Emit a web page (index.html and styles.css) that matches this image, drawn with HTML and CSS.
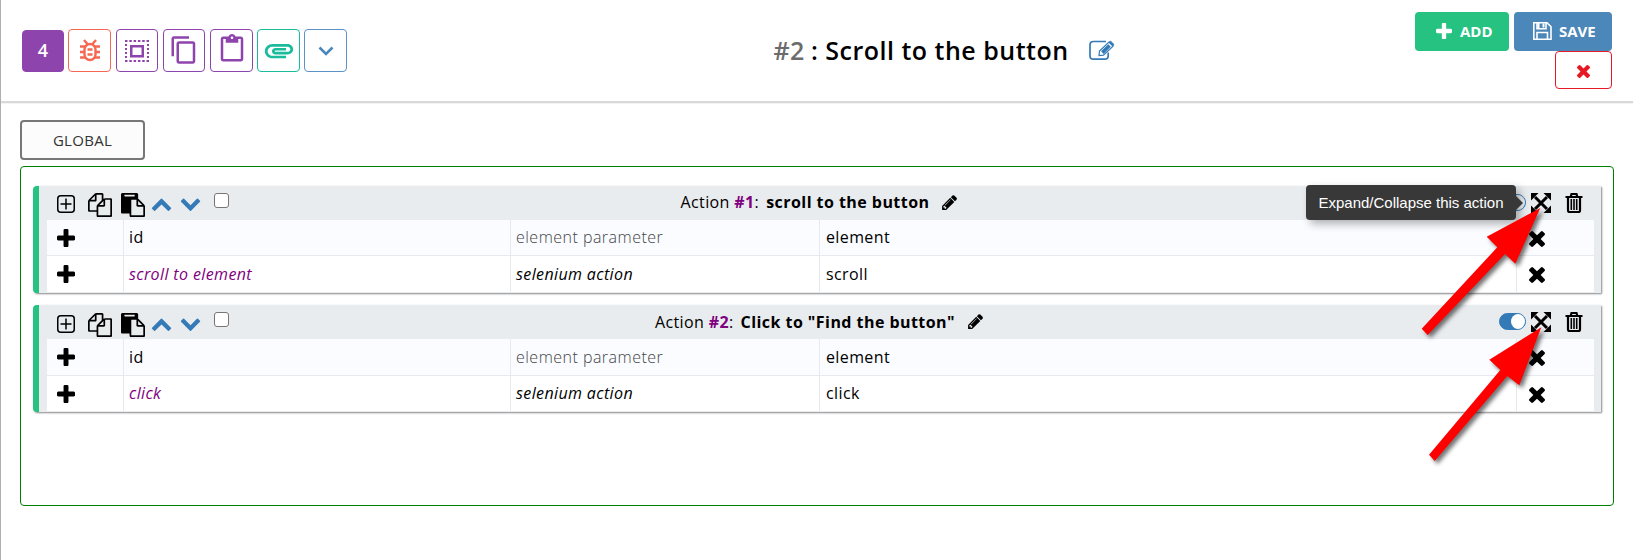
FILE: index.html
```html
<!DOCTYPE html>
<html lang="en">
<head>
<meta charset="utf-8">
<title>Scroll to the button</title>
<link rel="stylesheet" href="styles.css">
</head>
<body>
<svg class="defs" width="0" height="0">
  <symbol id="plus" viewBox="192 128 1408 1408"><path d="M1600 736v192q0 40-28 68t-68 28h-416v416q0 40-28 68t-68 28h-192q-40 0-68-28t-28-68v-416h-416q-40 0-68-28t-28-68v-192q0-40 28-68t68-28h416v-416q0-40 28-68t68-28h192q40 0 68 28t28 68v416h416q40 0 68 28t28 68z"/></symbol>
  <symbol id="times" viewBox="302 366 1188 1188"><path d="M1490 1322q0 40-28 68l-136 136q-28 28-68 28t-68-28l-294-294-294 294q-28 28-68 28t-68-28l-136-136q-28-28-28-68t28-68l294-294-294-294q-28-28-28-68t28-68l136-136q28-28 68-28t68 28l294 294 294-294q28-28 68-28t68 28l136 136q28 28 28 68t-28 68l-294 294 294 294q28 28 28 68z"/></symbol>
  <symbol id="up" viewBox="90 435 1612 1080"><path d="M1683 1331l-166 165q-19 19-45 19t-45-19l-531-531-531 531q-19 19-45 19t-45-19l-166-165q-19-19-19-45.500t19-45.500l742-741q19-19 45-19t45 19l742 741q19 19 19 45.500t-19 45.500z"/></symbol>
  <symbol id="down" viewBox="90 488 1612 1080"><path d="M1683 808l-742 741q-19 19-45 19t-45-19l-742-741q-19-19-19-45.500t19-45.500l166-165q19-19 45-19t45 19l531 531 531-531q19-19 45-19t45 19l166 165q19 19 19 45.500t-19 45.500z"/></symbol>
  <symbol id="pencil" viewBox="128 128 1515 1536"><path d="M491 1536l91-91-235-235-91 91v107h128v128h107zm523-928q0-22-22-22-10 0-17 7l-542 542q-7 7-7 17 0 22 22 22 10 0 17-7l542-542q7-7 7-17zm-54-192l416 416-832 832h-416v-416zm683 96q0 53-37 90l-166 166-416-416 166-165q36-38 90-38 53 0 91 38l235 234q37 39 37 91z"/></symbol>
  <symbol id="files" viewBox="0 0 1792 1792"><path d="M1696 384q40 0 68 28t28 68v1216q0 40-28 68t-68 28h-960q-40 0-68-28t-28-68v-288h-544q-40 0-68-28t-28-68v-672q0-40 20-88t48-76l408-408q28-28 76-48t88-20h416q40 0 68 28t28 68v328q68-40 128-40h416zm-544 213l-299 299h299v-299zm-640-384l-299 299h299v-299zm196 647l316-316v-416h-384v416q0 40-28 68t-68 28h-416v640h512v-256q0-40 20-88t48-76zm956 804v-1152h-384v416q0 40-28 68t-68 28h-416v640h896z"/></symbol>
  <symbol id="paste" viewBox="0 0 1792 1792"><path d="M768 1664h896v-640h-416q-40 0-68-28t-28-68v-416h-384v1152zm256-1440v-64q0-13-9.500-22.500t-22.500-9.500h-704q-13 0-22.500 9.500t-9.500 22.500v64q0 13 9.500 22.500t22.500 9.500h704q13 0 22.500-9.500t9.500-22.500zm256 672h299l-299-299v299zm512 128v672q0 40-28 68t-68 28h-960q-40 0-68-28t-28-68v-160h-544q-40 0-68-28t-28-68v-1344q0-40 28-68t68-28h1088q40 0 68 28t28 68v328q21 13 36 28l408 408q28 28 48 76t20 88z"/></symbol>
  <symbol id="add-box" viewBox="0 0 18 18"><rect x=".75" y=".75" width="16.500" height="16.500" rx="3" fill="none" stroke="#000" stroke-width="1.500"/><path d="M9 3.500v11M3.500 9h11" stroke="#000" stroke-width="1.500"/></symbol>
  <symbol id="expand" viewBox="0 0 20 20"><path d="M4 4l12 12M16 4L4 16" stroke="#000" stroke-width="3"/><path d="M0 0h7.500L0 7.500zM20 0v7.500L12.500 0zM0 20v-7.500L7.500 20zM20 20h-7.500l7.500-7.500z"/></symbol>
  <symbol id="trash" viewBox="0 0 18 20"><path d="M.5 4h17M5.800 3.500L6.500 1h5l.7 2.500" fill="none" stroke="#000" stroke-width="2.200"/><path d="M3 4v13.500q0 1.500 1.500 1.500h9q1.500 0 1.500-1.500V4" fill="none" stroke="#000" stroke-width="2.200"/><path d="M6.300 6v11M9 6v11M11.700 6v11" stroke="#000" stroke-width="1.600"/></symbol>
</svg>

<header class="topbar">
  <div class="tools">
    <span class="tool count">4</span>
    <span class="tool bug"><svg class="line" width="22" height="23" viewBox="0 0 22 23"><rect x="5.500" y="5" width="11" height="16" rx="5.500"/><path d="M5 1l3.500 4M17 1l-3.500 4M1 7.500h5M1 13h4.500M1 18.500h5M16 7.500h5M16.500 13H21M16 18.500h5M8.500 10.500h5M8.500 15.500h5"/></svg></span>
    <span class="tool select"><svg class="line" width="24" height="22" viewBox="0 0 24 22"><path stroke-dasharray="2.500 1.800" d="M0 1h24M0 21h24"/><path stroke-dasharray="2 2" d="M1 4v15M23 4v15"/><rect x="6.250" y="6.250" width="11.500" height="10" stroke-width="2.500"/></svg></span>
    <span class="tool copy"><svg width="30" height="30" viewBox="0 0 24 24"><path d="M16 1H4c-1.100 0-2 .9-2 2v14h2V3h12V1zm3 4H8c-1.100 0-2 .9-2 2v14c0 1.100.9 2 2 2h11c1.100 0 2-.9 2-2V7c0-1.100-.9-2-2-2zm0 16H8V7h11v14z"/></svg></span>
    <span class="tool paste"><svg width="30" height="30" viewBox="0 0 24 24"><path d="M19 2h-4.180C14.400.84 13.300 0 12 0c-1.300 0-2.400.84-2.820 2H5c-1.100 0-2 .9-2 2v16c0 1.100.9 2 2 2h14c1.100 0 2-.9 2-2V4c0-1.100-.9-2-2-2zm-7 0c.55 0 1 .45 1 1s-.45 1-1 1-1-.45-1-1 .45-1 1-1zm7 18H5V4h2v3h10V4h2v16z"/></svg></span>
    <span class="tool clip"><svg width="34" height="31" viewBox="0 0 24 24" preserveAspectRatio="none"><path d="M2 12.500C2 9.460 4.460 7 7.500 7H18c2.210 0 4 1.790 4 4s-1.790 4-4 4H9.500C8.120 15 7 13.880 7 12.500S8.120 10 9.500 10H17v2H9.410c-.55 0-.55 1 0 1H18c1.100 0 2-.9 2-2s-.9-2-2-2H7.500C5.570 9 4 10.570 4 12.500S5.570 16 7.500 16H17v2H7.500C4.460 18 2 15.540 2 12.500z"/></svg></span>
    <span class="tool more"><svg width="16" height="10" viewBox="0 0 16 10"><path d="M1.500 1.500L8 8l6.500-6.500" fill="none" stroke="currentColor" stroke-width="2.600"/></svg></span>
  </div>
  <h1 class="title"><span class="num">#2</span><span class="name">: Scroll to the button</span>
    <svg class="line edit" width="26" height="21" viewBox="0 0 26 21"><path d="M17 1.500H4.500Q1 1.500 1 5v10.700Q1 19.200 4.500 19.200h11.200q3.500 0 3.500-3.500V12.500" stroke-width="1.700"/><path d="M10 15.500l.5-4.500L20 2l4.200 4L14.500 15.200z" stroke-width="1.200"/><path d="M13.300 12.600L20.500 5.500" stroke-width="3.600"/><path d="M20 2.300l1.500-1.300 3.500 3.500-1.500 1.300z" fill="currentColor" stroke-width=".8"/></svg>
  </h1>
  <div class="actions">
    <div class="row"><span class="btn add"><svg width="16" height="16"><use href="#plus"/></svg>ADD</span><span class="btn save"><svg class="line" width="19" height="18" viewBox="0 0 19 18"><path stroke-width="1.600" d="M.8.8h13.200l4 4v12.400H.8zM4 .8v5.900h9V.8M4 17v-6.500h10.500V17"/><path d="M10.500 1.500v4M5.500 1v5" stroke-width="2"/></svg>SAVE</span></div>
    <span class="btn close"><svg width="13" height="13"><use href="#times"/></svg></span>
  </div>
</header>

<main class="page">
  <div class="tab">GLOBAL</div>
  <section class="board">
    <article class="card first">
      <div class="head">
        <div class="left"><svg class="i-add"><use href="#add-box"/></svg><svg class="i-doc"><use href="#files"/></svg><svg class="i-doc i-paste"><use href="#paste"/></svg><svg class="i-chev"><use href="#up"/></svg><svg class="i-chev"><use href="#down"/></svg><span class="check"></span></div>
        <div class="caption">Action <b class="idx">#1</b>:<b class="name">scroll to the button</b><svg class="i-pencil"><use href="#pencil"/></svg></div>
        <div class="right"><span class="toggle"></span><svg class="i-exp"><use href="#expand"/></svg><svg class="i-trash"><use href="#trash"/></svg>
          <div class="tip">Expand/Collapse this action</div></div>
      </div>
      <div class="grid">
        <div class="c"><svg class="i-plus"><use href="#plus"/></svg></div><div class="c">id</div><div class="c muted">element parameter</div><div class="c val">element</div><div class="c x"><svg class="i-x"><use href="#times"/></svg></div>
        <div class="c w"><svg class="i-plus"><use href="#plus"/></svg></div><div class="c w act">scroll to element</div><div class="c w it">selenium action</div><div class="c w val">scroll</div><div class="c w x"><svg class="i-x"><use href="#times"/></svg></div>
      </div>
    </article>
    <article class="card second">
      <div class="head">
        <div class="left"><svg class="i-add"><use href="#add-box"/></svg><svg class="i-doc"><use href="#files"/></svg><svg class="i-doc i-paste"><use href="#paste"/></svg><svg class="i-chev"><use href="#up"/></svg><svg class="i-chev"><use href="#down"/></svg><span class="check"></span></div>
        <div class="caption">Action <b class="idx">#2</b>:<b class="name">Click to "Find the button"</b><svg class="i-pencil"><use href="#pencil"/></svg></div>
        <div class="right"><span class="toggle"></span><svg class="i-exp"><use href="#expand"/></svg><svg class="i-trash"><use href="#trash"/></svg></div>
      </div>
      <div class="grid">
        <div class="c"><svg class="i-plus"><use href="#plus"/></svg></div><div class="c">id</div><div class="c muted">element parameter</div><div class="c val">element</div><div class="c x"><svg class="i-x"><use href="#times"/></svg></div>
        <div class="c w"><svg class="i-plus"><use href="#plus"/></svg></div><div class="c w act">click</div><div class="c w it">selenium action</div><div class="c w val">click</div><div class="c w x"><svg class="i-x"><use href="#times"/></svg></div>
      </div>
    </article>
  </section>
</main>
<svg class="arrows" width="1633" height="560" viewBox="0 0 1633 560">
  <path d="M1421.700 328.700L1497.300 247.300L1486.700 236.700L1540.300 208L1515.300 263.700L1505 254L1427.700 335z"/>
  <path d="M1429 454.700L1500.300 370L1489.300 359.700L1541.300 327.300L1519.300 385.300L1507.300 376L1434.700 461z"/>
</svg>
</body>
</html>
```
FILE: styles.css
```css
* { box-sizing: border-box; }
body {
  margin: 0;
  height: 560px;
  overflow: hidden;
  background: #fff;
  border-left: 1px solid #b0b0b0;
  font: 16px/22px "Open Sans", "Noto Sans", sans-serif;
  color: #000;
}
svg { display: block; flex: none; fill: currentColor; }
.line { fill: none; stroke: currentColor; stroke-width: 2; }
.bug .line { stroke-width: 2.400; }
.defs { position: absolute; }

.topbar {
  display: grid;
  grid-template-columns: 500px 1fr 500px;
  height: 103px;
  border-bottom: 2px solid #d9d9d9;
  box-shadow: 0 1px 0 #f3f3f3;
}
.tools { display: flex; gap: 4px; padding: 29px 0 0 20px; }
.tool {
  width: 43px;
  height: 43px;
  display: flex;
  align-items: center;
  justify-content: center;
  border: 1px solid #8e44ad;
  border-radius: 4px;
  color: #8e44ad;
}
.count { width: 42px; height: 42px; margin: 1px 0 0 1px; padding-bottom: 2px; background: #8e44ad; color: #fff; font-weight: 600; font-size: 18px; }
.bug { color: #f56954; border-color: #f56954; }
.select { width: 42px; margin-left: 1px; }
.copy { width: 42px; margin-left: 1px; }
.copy svg { margin-bottom: 1px; }
.paste { margin-left: 1px; }
.paste svg { margin-bottom: 3px; }
.clip { color: #1abc9c; border-color: #1abc9c; }
.more { color: #4c87b9; border-color: #5b93c8; }

.title {
  display: flex;
  justify-content: center;
  margin: 0;
  padding: 33px 0 0 254px;
  font-size: 25px;
  line-height: 34px;
  font-weight: 600;
  letter-spacing: .5px;
  white-space: nowrap;
}
.num { color: #6c6c6c; margin-right: 6px; }
.edit { margin: 7px 0 0 20px; color: #337ab7; }

.actions { display: flex; flex-direction: column; align-items: flex-end; padding: 12px 21px 0 0; }
.row { display: flex; gap: 5px; }
.btn {
  display: flex;
  align-items: center;
  height: 39px;
  padding-bottom: 1px;
  border-radius: 4px;
  color: #fff;
  font-weight: 700;
  font-size: 15px;
}
.add { width: 94px; padding-left: 21px; gap: 8px; background: #26c281; }
.save { width: 98px; padding-left: 19px; gap: 7px; background: #4c87b9; }
.close { width: 57px; height: 38px; padding: 2px 0 0; justify-content: center; border: 1px solid #e51a24; color: #e51a24; }

.page { padding: 17px 19px 0; }
.tab {
  width: 125px;
  height: 40px;
  border: 2px solid #777;
  border-radius: 4px;
  background: #fcfcfc;
  color: #333;
  font-size: 15px;
  line-height: 37px;
  letter-spacing: .3px;
  text-align: center;
}
.board { height: 340px; margin-top: 6px; padding: 19px 12px; border: 1px solid #008000; border-radius: 4px; }
.card {
  height: 107px;
  padding: 0 7px 0 8px;
  border-left: 6px solid #26c281;
  border-radius: 4px 0 0 4px;
  background: #e9ecef;
  box-shadow: 1px 1px 2px #888;
  letter-spacing: .38px;
}
.card + .card { margin-top: 12px; }
.head { position: relative; display: flex; justify-content: center; height: 34px; }
.left { position: absolute; left: 10px; top: 7px; display: flex; }
.i-add { width: 18px; height: 18px; margin-top: 2px; }
.i-doc { width: 24px; height: 24px; margin-left: 13px; }
.i-paste { margin-left: 9px; }
.i-chev { width: 21px; height: 13px; margin: 5px 0 0 8px; color: #337ab7; }
.i-paste + .i-chev { margin-left: 6px; }
.check { width: 15px; height: 15px; margin-left: 13px; border: 1px solid #767676; border-radius: 3px; background: #fff; }
.second .left { top: 8px; }
.second .check { margin-top: -1px; }
.caption { display: flex; white-space: pre; padding: 5px 3px 0 0; }
.caption b { font-weight: 700; }
.caption .idx { color: #800080; }
.caption .name { margin-left: 7px; letter-spacing: .45px; }
.second .caption { padding-top: 6px; }
.i-pencil { width: 15px; height: 15px; margin: 4px 0 0 13px; }
.second .i-pencil { margin-top: 3px; }
.right { position: absolute; right: 11px; top: 7px; display: flex; }
.toggle { width: 27px; height: 17px; margin: 1px 5px 0 0; border: 1px solid #337ab7; border-radius: 9px; background: #337ab7; }
.toggle::after { content: ""; display: block; width: 14px; height: 15px; margin-left: 11px; border-radius: 50%; background: #fff; }
.first .toggle::after { background: #e9ecef; }
.i-exp { width: 20px; height: 20px; }
.i-trash { width: 18px; height: 20px; margin-left: 14px; }
.tip {
  position: absolute;
  right: 67px;
  top: -8px;
  width: 210px;
  height: 35px;
  border-radius: 4px;
  background: #383838;
  box-shadow: 4px 4px 8px rgba(0,0,0,.3);
  color: #fff;
  font: 15px/35px "Liberation Sans", Arial, sans-serif;
  letter-spacing: 0;
  text-align: center;
  white-space: nowrap;
}
.tip::after { content: ""; position: absolute; left: 100%; top: 11px; border: 7px solid transparent; border-left-color: #383838; border-right: 0; }

.grid { display: grid; grid-template-columns: 76px 387px 309px 697px 1fr; grid-template-rows: 35px 37px; }
.c { padding: 6px 0 0 5px; background: #fafcff; border-left: 1px solid #e6e9ed; white-space: nowrap; }
.c:nth-child(5n+1) { border-left: 0; }
.w { background: #fff; border-top: 1px solid #e6e9ed; padding-top: 7px; }
.val { padding-left: 6px; }
.second .grid { grid-template-rows: 36px 36px; }
.second .c { padding-top: 7px; }
.second .w { padding-top: 6px; }
.muted { color: #444; font-weight: 300; letter-spacing: .48px; }
.act { color: #800080; font-style: italic; }
.it { font-style: italic; }
.i-plus { width: 18px; height: 18px; margin: 3px 0 0 5px; }
.w .i-plus { margin-top: 2px; }
.second .i-plus { margin-top: 2px; }
.second .w .i-plus { margin-top: 3px; }
.i-x { width: 16px; height: 16px; margin: 5px 0 0 7px; }
.w .i-x { margin-top: 4px; }
.second .i-x { margin-top: 4px; }
.second .w .i-x { margin-top: 5px; }

.arrows { position: absolute; left: 0; top: 0; fill: #f00; filter: drop-shadow(3px 3px 2px rgba(0,0,0,.55)); }
```
